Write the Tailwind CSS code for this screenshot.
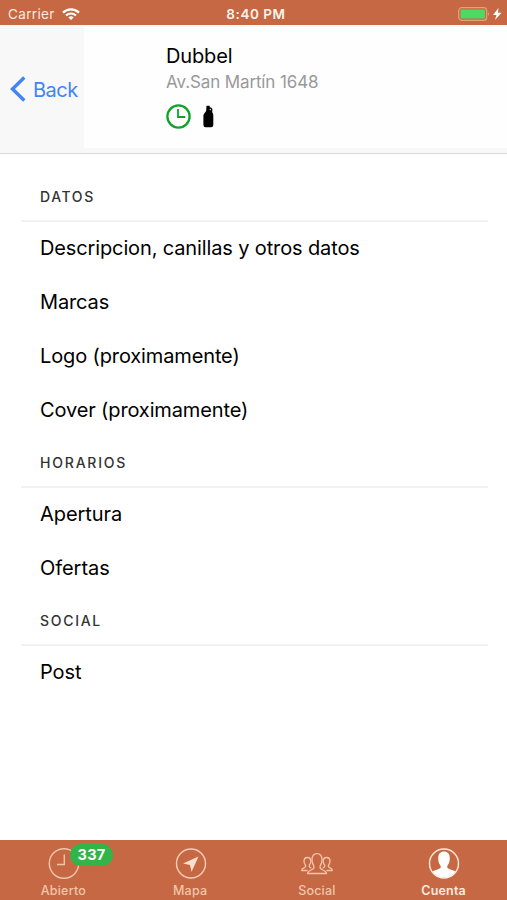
<!DOCTYPE html>
<html lang="es">
<head>
<meta charset="utf-8">
<title>Dubbel</title>
<script src="https://cdn.jsdelivr.net/npm/@tailwindcss/browser@4"></script>
</head>
<body class="bg-white">
<div class="flex h-[900px] w-[507px] flex-col overflow-hidden bg-white font-['Inter',sans-serif] text-black">
  <div class="grid h-[25px] shrink-0 grid-cols-3 items-center bg-[#c66843] text-white">
    <div class="flex items-center gap-[7px] pt-[2px] pl-2">
      <span class="text-[13.5px] leading-4 tracking-[0.35px] text-[#fbe9df]">Carrier</span>
      <svg class="h-3 w-[18px]" viewBox="0 0 18 12" fill="none" stroke="#fff" stroke-width="2.2"><path d="M1 4.6a11.5 11.5 0 0 1 16 0M4 7.5a7.3 7.3 0 0 1 10 0"/><path d="M9 12 6.3 9.4a4 4 0 0 1 5.4 0z" fill="#fff" stroke="none"/></svg>
    </div>
    <div class="pt-[3px] pl-[5px] text-center text-[13.5px] leading-4 font-semibold tracking-[0.55px] text-[#fff3ec]">8:40 PM</div>
    <div class="flex items-center justify-end pt-[2px] pr-[5px]">
      <svg class="h-[14px] w-[44px]" viewBox="0 0 44 14"><rect x=".7" y=".7" width="28" height="12.6" rx="3" fill="none" stroke="#e4a17c" stroke-width="1.2"/><rect x="2.5" y="2.5" width="24.5" height="9" rx="1" fill="#4cd964"/><path d="M30 5q2 2 0 4z" fill="#e4a17c"/><path d="m40.500 1-5.500 7h3.500L37 13l6.500-7.200H40z" fill="#fff"/></svg>
    </div>
  </div>

  <header class="flex h-[129px] shrink-0 border-b border-[#d9d9d9] bg-[#f8f8f8] pt-[2px]">
    <button class="flex w-[84px] shrink-0 items-center gap-[6px] pb-[3px] pl-[10px] text-[#4285f4]">
      <svg class="h-[26px] w-4 shrink-0" viewBox="0 0 16 26" fill="none" stroke="#4285f4" stroke-width="3.4"><path d="M14.3 1.5 2.5 13l11.8 11.5"/></svg>
      <span class="pt-[3px] pl-px text-[20px] leading-6 tracking-[-0.5px]">Back</span>
    </button>
    <div class="mb-[5px] flex-1 bg-[#fefefe] pt-[17px] pl-[82px]">
      <h1 class="text-[20px] leading-6 tracking-[-0.15px]">Dubbel</h1>
      <p class="pt-[3px] text-[17px] leading-[22px] tracking-[-0.12px] text-[#999]">Av.San Martín 1648</p>
      <div class="flex items-center gap-3 pt-[11px]">
        <svg class="h-[25px] w-[25px]" viewBox="0 0 25 25" fill="none" stroke="#10a32a" stroke-width="2.3"><circle cx="12.5" cy="12.500" r="11.100"/><path d="M12 5v8h7.300" stroke-width="1.800"/></svg>
        <svg class="h-[23px] w-[11px]" viewBox="0 0 11 23"><path d="M3.500.8h3.200v1.500c3 .3 3.300 2.900 2.300 4.700 1 1 1.300 2 1.300 4v9q0 2.300-2.300 2.300H2.700Q.4 22.300.4 20v-9c0-3 2.800-3.500 2.800-6z"/><circle cx="7.300" cy="4.600" r=".8" fill="#ccc"/></svg>
      </div>
    </div>
  </header>

  <main class="flex-1 pt-[18px] pr-[19px] pl-[21px]">
    <section>
      <h2 class="flex h-[50px] items-center border-b-2 border-[#f2f2f2] pl-[19px] text-[14px] font-[450] tracking-[1.6px] text-[#333]">DATOS</h2>
      <ul class="-mt-px mb-px pl-[19px] text-[20px] tracking-[-0.13px]">
        <li class="flex h-[54px] items-center">Descripcion, canillas y otros datos</li>
        <li class="flex h-[54px] items-center">Marcas</li>
        <li class="flex h-[54px] items-center">Logo (proximamente)</li>
        <li class="flex h-[54px] items-center">Cover (proximamente)</li>
      </ul>
    </section>
    <section>
      <h2 class="flex h-[50px] items-center border-b-2 border-[#f2f2f2] pl-[19px] text-[14px] font-[450] tracking-[1.8px] text-[#333]">HORARIOS</h2>
      <ul class="-mt-px mb-px pl-[19px] text-[20px] tracking-[-0.05px]">
        <li class="flex h-[54px] items-center">Apertura</li>
        <li class="flex h-[54px] items-center">Ofertas</li>
      </ul>
    </section>
    <section>
      <h2 class="flex h-[50px] items-center border-b-2 border-[#f2f2f2] pl-[19px] text-[14px] font-[450] tracking-[1.7px] text-[#333]">SOCIAL</h2>
      <ul class="-mt-px pl-[19px] text-[20px] tracking-[-0.1px]">
        <li class="flex h-[54px] items-center">Post</li>
      </ul>
    </section>
  </main>

  <nav class="grid h-[60px] shrink-0 grid-cols-4 bg-[#c66843] text-center text-[12.5px] leading-4 font-medium tracking-[0.2px] text-[#f2c5ab]">
    <a class="relative flex flex-col items-center gap-[4px] pt-[7px]">
      <svg class="ml-px h-8 w-8" viewBox="0 0 32 32" fill="none" stroke="#f2c5ab" stroke-width="1.4"><circle cx="16" cy="16.500" r="14.700"/><path d="M16.300 7.500v10H9"/></svg>
      <span>Abierto</span>
      <span class="absolute top-1 left-[70px] h-[22px] w-[43px] rounded-full bg-[#32b548] text-[14.5px] leading-[22px] font-bold tracking-[0.3px] text-white">337</span>
    </a>
    <a class="flex flex-col items-center gap-[4px] pt-[7px]">
      <svg class="ml-px h-8 w-8" viewBox="0 0 32 32" fill="none" stroke="#f5cdb6" stroke-width="1.4"><circle cx="16" cy="16.500" r="14.500"/><path d="m23.500 9.500-15.500 7 7 1.500 1.500 7z" fill="#f9ded0" stroke="none"/></svg>
      <span>Mapa</span>
    </a>
    <a class="flex flex-col items-center gap-[4px] pt-[7px]">
      <svg class="h-8 w-8" viewBox="0 0 32 32" fill="none" stroke="#f2c5ab" stroke-width="1.3" stroke-linejoin="round"><path d="M6.500 26.500c0-4 6.500-2.500 6.500-6.500 0-1.800-2-3-2-7 0-3.700 1.800-6.300 5-6.300s5 2.600 5 6.300c0 4-2 5.200-2 7 0 4 6.500 2.500 6.500 6.500z"/><path d="M6.500 23.500H.7c0-3.500 4-2 4-4.500 0-1.300-1.700-2-1.700-4.700 0-2.300 1.400-3.800 3.400-3.800s3.400 1.500 3.400 3.800c0 2.700-1.700 3.400-1.700 4.700 0 1.200 1.200 1.700 2.300 2M25.500 23.500h5.800c0-3.500-4-2-4-4.500 0-1.300 1.700-2 1.700-4.700 0-2.300-1.400-3.800-3.400-3.800s-3.400 1.500-3.400 3.800c0 2.700 1.700 3.400 1.700 4.700 0 1.200-1.200 1.700-2.300 2"/></svg>
      <span>Social</span>
    </a>
    <a class="flex flex-col items-center gap-[4px] pt-[7px] font-semibold text-[#ffeade]">
      <svg class="h-8 w-8" viewBox="0 0 32 32"><circle cx="16" cy="16.500" r="14.500" fill="none" stroke="#ffeade" stroke-width="1.400"/><path d="M4.500 24.500c2-1.800 8.300-1.800 8.300-4.800 0-1.700-2.600-2.700-2.600-8.200 0-5 2.300-7 5.800-7s5.800 2 5.800 7c0 5.500-2.600 6.500-2.600 8.200 0 3 6.300 3 8.300 4.800a14 14 0 0 1-23 0z" fill="#fff"/></svg>
      <span>Cuenta</span>
    </a>
  </nav>
</div>
</body>
</html>
